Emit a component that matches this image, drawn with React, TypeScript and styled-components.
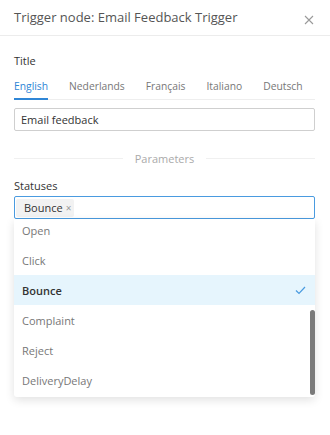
import React from 'react';
import styled, {createGlobalStyle} from 'styled-components';

const GlobalStyle = createGlobalStyle`
    body {
        margin: 0;
        background: #fff;
        font-family: "Open Sans", "Liberation Sans", sans-serif;
    }
`;

const languages = ['English', 'Nederlands', 'Français', 'Italiano', 'Deutsch'];
const statuses = ['Open', 'Click', 'Bounce', 'Complaint', 'Reject', 'DeliveryDelay'];
const selected = 'Bounce';

const CloseIcon = () => (
    <svg width='10' height='10' viewBox='0 0 10 10'>
        <path d='M1 1L9 9M9 1L1 9' stroke='#9a9a9a' strokeWidth='1.1' fill='none'/>
    </svg>
);

const CheckIcon = () => (
    <svg width='11' height='9' viewBox='0 0 11 9'>
        <path d='M1 4.5L4 7.5L10 1' stroke='#4a9be0' strokeWidth='1.2' fill='none'/>
    </svg>
);

export default function App() {
    return (
        <>
            <GlobalStyle/>
            <Panel>
                <Header>
                    <HeaderTitle>Trigger node: Email Feedback Trigger</HeaderTitle>
                    <CloseButton><CloseIcon/></CloseButton>
                </Header>
                <Body>
                    <Label>Title</Label>
                    <Tabs>
                        {languages.map((lang, i) => (
                            <Tab key={lang} active={i === 0}>{lang}</Tab>
                        ))}
                    </Tabs>
                    <TextInput>Email feedback</TextInput>
                    <Divider><span>Parameters</span></Divider>
                    <Label>Statuses</Label>
                    <SelectWrap>
                        <Select>
                            <Tag>
                                {selected}
                                <TagClose>×</TagClose>
                            </Tag>
                        </Select>
                        <Dropdown>
                            <OptionList>
                                {statuses.map((s) => (
                                    <Option key={s} active={s === selected}>
                                        {s}
                                        {s === selected ? <CheckIcon/> : null}
                                    </Option>
                                ))}
                            </OptionList>
                            <ScrollThumb/>
                        </Dropdown>
                    </SelectWrap>
                </Body>
            </Panel>
        </>
    );
}

const Panel = styled.div`
    width: 330px;
    height: 435px;
    background: #fff;
`;

const Header = styled.div`
    height: 36px;
    display: flex;
    align-items: center;
    justify-content: space-between;
    padding: 0 14px 0 14px;
    border-bottom: 1px solid #ececec;
    box-sizing: border-box;
`;

const HeaderTitle = styled.div`
    font-size: 13px;
    color: #555;
    margin-top: -2px;
`;

const CloseButton = styled.div`
    display: flex;
    margin-top: 4px;
    margin-right: 2px;
`;

const Body = styled.div`
    padding: 17px 15px 0 14px;
`;

const Label = styled.div`
    font-size: 11px;
    color: #333;
    line-height: 16px;
`;

const Tabs = styled.div`
    display: flex;
    gap: 21px;
    margin-top: 9px;
    border-bottom: 1px solid #eee;
`;

const Tab = styled.div<{active: boolean}>`
    font-size: 10.3px;
    line-height: 16px;
    padding-bottom: 4px;
    color: ${({active}) => (active ? '#2f86d6' : '#777')};
    border-bottom: 2px solid ${({active}) => (active ? '#2f86d6' : 'transparent')};
    margin-bottom: -1px;
`;

const TextInput = styled.div`
    margin-top: 8px;
    height: 23px;
    border: 1px solid #cfcfcf;
    border-radius: 2px;
    box-sizing: border-box;
    padding: 0 6px;
    display: flex;
    align-items: center;
    font-size: 11px;
    color: #333;
`;

const Divider = styled.div`
    display: flex;
    align-items: center;
    gap: 12px;
    margin: 20px 0 12px 0;
    font-size: 11px;
    color: #aaa;
    &::before, &::after {
        content: '';
        flex: 1;
        height: 1px;
        background: #f0f0f0;
    }
`;

const SelectWrap = styled.div`
    position: relative;
    margin-top: 2px;
`;

const Select = styled.div`
    height: 23px;
    border: 1px solid #4a9be0;
    border-radius: 2px;
    box-sizing: border-box;
    padding: 0 1px;
    display: flex;
    align-items: center;
`;

const Tag = styled.div`
    display: flex;
    align-items: center;
    height: 18px;
    padding: 0 3px 0 8px;
    background: #f2f2f2;
    border-radius: 2px;
    font-size: 11px;
    color: #333;
`;

const TagClose = styled.span`
    font-size: 10px;
    color: #999;
    margin-left: 3px;
`;

const Dropdown = styled.div`
    position: absolute;
    top: 23px;
    left: 0;
    right: 0;
    height: 178px;
    overflow: hidden;
    background: #fff;
    border-radius: 0 0 3px 3px;
    box-shadow: 0 3px 10px rgba(0, 0, 0, 0.12);
`;

const OptionList = styled.div`
    margin-top: -4px;
`;

const Option = styled.div<{active: boolean}>`
    height: 30px;
    display: flex;
    align-items: center;
    justify-content: space-between;
    padding: 0 9px 0 8px;
    font-size: 11px;
    color: ${({active}) => (active ? '#333' : '#777')};
    font-weight: ${({active}) => (active ? 600 : 400)};
    background: ${({active}) => (active ? '#e6f5fd' : '#fff')};
`;

const ScrollThumb = styled.div`
    position: absolute;
    right: 0;
    top: 91px;
    width: 5px;
    height: 85px;
    border-radius: 3px;
    background: #7a7a7a;
`;
